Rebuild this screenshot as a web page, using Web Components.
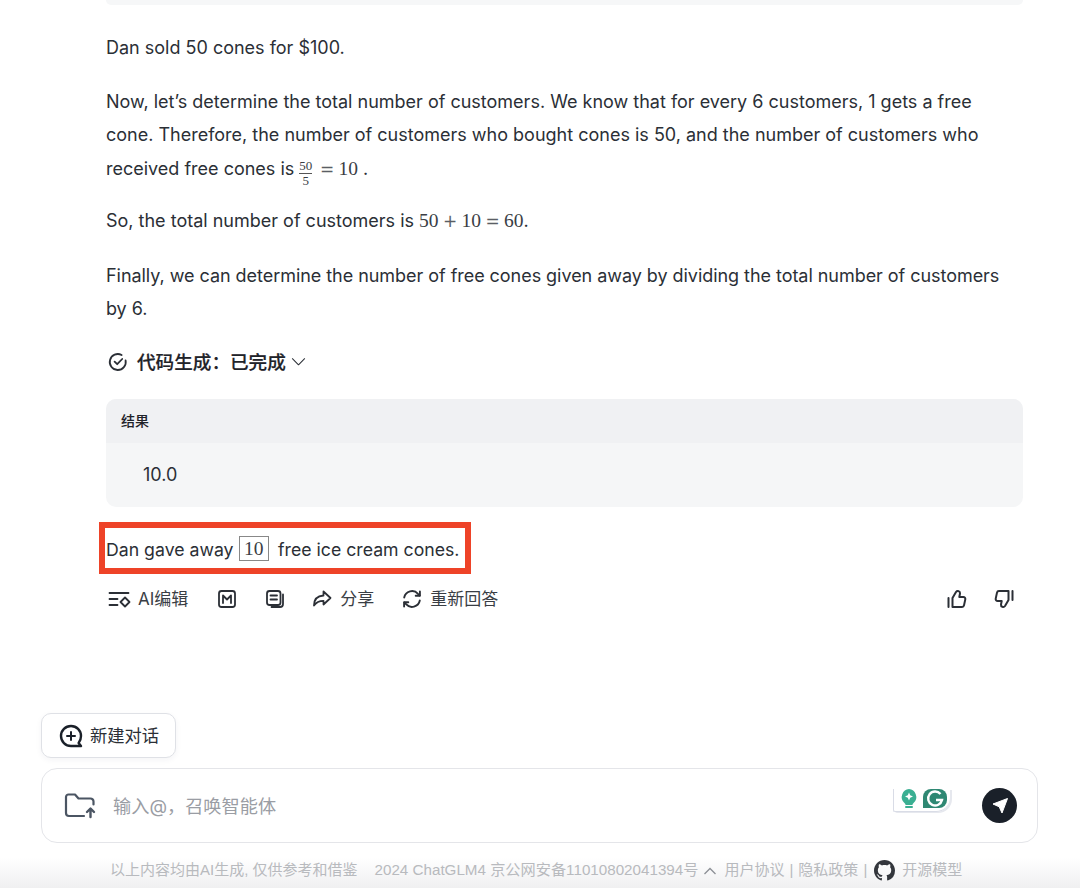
<!DOCTYPE html>
<html lang="en">
<head>
<meta charset="utf-8">
<title>ChatGLM</title>
<style>
  html, body { margin: 0; background: #fff; }
  body { font-family: Inter, "Noto Sans CJK SC", sans-serif; color: #2b2f36; width: 1080px; height: 888px; overflow: hidden; }
</style>
</head>
<body>
<chat-page></chat-page>

<script>
const CJK = `Inter, "Noto Sans CJK SC", sans-serif`;

class ChatPara extends HTMLElement {
  constructor() { super(); this.attachShadow({ mode: "open" }); }
  connectedCallback() {
    this.shadowRoot.innerHTML = `
    <style>
      :host { display: block; font: 18px/33.5px ${CJK}; color: #2b2f36; }
    </style>
    <slot></slot>`;
  }
}

class MathText extends HTMLElement {
  constructor() { super(); this.attachShadow({ mode: "open" }); }
  connectedCallback() {
    this.shadowRoot.innerHTML = `
    <style>
      :host { display: inline; font-family: "Liberation Serif", serif; font-size: 19.5px; line-height: 0; word-spacing: -1px; color: #3a3e45; }
    </style>
    <slot></slot>`;
  }
}

class MathFrac extends HTMLElement {
  constructor() { super(); this.attachShadow({ mode: "open" }); }
  connectedCallback() {
    this.shadowRoot.innerHTML = `
    <style>
      :host { display: inline-flex; flex-direction: column; align-items: center; vertical-align: 5px; margin: -8px 2px -8px 0; font: 13px/14.5px "Liberation Serif", serif; color: #3a3e45; }
      .top { border-bottom: 1px solid #555; }
    </style>
    <span class="top">${this.getAttribute("top")}</span>
    <span class="bottom">${this.getAttribute("bottom")}</span>`;
  }
}

class ToolStatus extends HTMLElement {
  constructor() { super(); this.attachShadow({ mode: "open" }); }
  connectedCallback() {
    this.shadowRoot.innerHTML = `
    <style>
      :host { display: flex; align-items: center; height: 32px; padding-left: 2px; font: 500 18.6px/32px ${CJK}; color: #1f2329; -webkit-text-stroke: .2px #1f2329; }
      svg { display: block; margin-right: 9px; }
      .chev { margin: 0 0 0 5px; }
    </style>
    <svg width="20" height="20" viewBox="0 0 20 20" fill="none" stroke="#2b2f36" stroke-width="1.8" stroke-linecap="round" stroke-linejoin="round">
      <path d="M17.6 8.4A8 8 0 1 1 13.6 3"/><path d="M6.6 9.6l2.6 2.6 5-5.2"/>
    </svg>
    <span>代码生成：已完成</span>
    <svg class="chev" width="15" height="15" viewBox="0 0 16 16" fill="none" stroke="#2b2f36" stroke-width="1.1" stroke-linecap="round" stroke-linejoin="round"><path d="M1.500 5l6.500 6.500 6.500-6.500"/></svg>`;
  }
}

class ResultBox extends HTMLElement {
  constructor() { super(); this.attachShadow({ mode: "open" }); }
  connectedCallback() {
    this.shadowRoot.innerHTML = `
    <style>
      :host { display: block; border-radius: 10px; overflow: hidden; background: #f5f6f7; }
      .head { height: 44px; background: #f0f1f3; padding-left: 15px; font: 500 14px/44px ${CJK}; color: #1f2329; }
      .body { height: 64px; padding-left: 37px; font: 18px/64px ${CJK}; color: #2b2f36; }
    </style>
    <div class="head">${this.getAttribute("title")}</div>
    <div class="body"><slot></slot></div>`;
  }
}

class ActionBar extends HTMLElement {
  constructor() { super(); this.attachShadow({ mode: "open" }); }
  connectedCallback() {
    this.shadowRoot.innerHTML = `
    <style>
      :host { display: flex; align-items: center; height: 30px; font: 17px/30px ${CJK}; color: #3a3e45; }
      .item { display: flex; align-items: center; gap: 6px; }
      svg { display: block; fill: none; stroke: #2b2f36; stroke-width: 1.8; stroke-linecap: round; stroke-linejoin: round; }
      .spacer { flex: 1; }
    </style>
    <div class="item" style="margin-left:2px">
      <svg width="24" height="24" viewBox="0 0 24 24"><path d="M1.500 6h19M1.500 12h8M1.500 18h8"/><path d="M17 10.500l4.500 4.500-4.500 4.500-4.500-4.500z"/></svg>
      <span>AI编辑</span>
    </div>
    <div class="item" style="margin-left:29px">
      <svg width="20" height="20" viewBox="0 0 20 20"><rect x="2" y="2" width="16" height="16" rx="2.500"/><path d="M6 14V6.500l4 4 4-4V14" /></svg>
    </div>
    <div class="item" style="margin-left:28px">
      <svg width="20" height="20" viewBox="0 0 20 20"><rect x="2" y="2" width="13.500" height="14" rx="2.500"/><path d="M5.500 6.500h6.500M5.500 10.500h6.500M18 5.500V15a3 3 0 0 1-3 3H6.500"/></svg>
    </div>
    <div class="item" style="margin-left:26px">
      <svg width="22" height="22" viewBox="0 0 22 22"><path d="M12.500 3.500l7 6.500-7 6.500v-3.700c-4 0-7 1-9.500 4.700 0-5.500 3-9.500 9.500-10z"/></svg>
      <span style="margin-left:1px">分享</span>
    </div>
    <div class="item" style="margin-left:27px">
      <svg width="22" height="22" viewBox="0 0 22 22"><path d="M3.200 9.500a8 8 0 0 1 13.800-3.700l1.600 1.700M18.800 12.500a8 8 0 0 1-13.800 3.700l-1.600-1.700" stroke-width="1.900"/><path d="M18.900 3.500v4.200h-4.200M3.100 18.500v-4.200h4.200" stroke-width="1.900"/></svg>
      <span style="margin-left:1px">重新回答</span>
    </div>
    <div class="spacer"></div>
    <svg width="22" height="22" viewBox="0 0 22 22"><path d="M2.500 10v9M6.500 10v9h9.500a2 2 0 0 0 2-1.600l1.300-6a2 2 0 0 0-2-2.400h-4l.7-3.500a2.200 2.200 0 0 0-4-1.500z" stroke-width="2"/></svg>
    <svg width="22" height="22" viewBox="0 0 22 22" style="margin-left:25px;margin-right:8px"><path d="M19.500 12V3M15.500 12V3H6a2 2 0 0 0-2 1.600l-1.300 6a2 2 0 0 0 2 2.400h4l-.7 3.500a2.200 2.200 0 0 0 4 1.500z" stroke-width="2"/></svg>`;
  }
}

class NewChatButton extends HTMLElement {
  constructor() { super(); this.attachShadow({ mode: "open" }); }
  connectedCallback() {
    this.shadowRoot.innerHTML = `
    <style>
      :host { display: inline-flex; align-items: center; box-sizing: border-box; width: 135px; height: 45px; padding-left: 17px; gap: 7px; border: 1px solid #dfe1e6; border-radius: 10px; background: #fff; box-shadow: 0 2px 6px rgba(30,40,70,.05); font: 17.300px/24px ${CJK}; color: #2b2f36; }
      svg { display: block; }
    </style>
    <svg width="24" height="24" viewBox="0 0 24 24" fill="none" stroke="#1a2029" stroke-width="2.400" stroke-linecap="round" stroke-linejoin="round">
      <path d="M22 22h-10a10 10 0 1 1 10-10c0 3-.8 5-2.400 7z"/><path d="M12 8v8M8 12h8" stroke-width="2"/>
    </svg>
    <span><slot></slot></span>`;
  }
}

class ChatComposer extends HTMLElement {
  constructor() { super(); this.attachShadow({ mode: "open" }); }
  connectedCallback() {
    this.shadowRoot.innerHTML = `
    <style>
      :host { display: flex; align-items: center; box-sizing: border-box; height: 75px; border: 1px solid #e4e5e9; border-radius: 16px; background: #fff; padding: 0 20px 0 22px; font: 18.200px/24px ${CJK}; }
      .folder { display: block; margin-right: 16px; }
      .hint { color: #9a9da4; flex: 1; }
      .ext { position: relative; width: 57px; height: 23px; margin: -10px 32px 0 0; border: 1px solid #d9dce6; border-top: 0; border-right: 0; border-radius: 0 0 14px 2px; box-sizing: border-box; box-shadow: 2px 1px 0 #e6e8ee; }
      .ext svg { position: absolute; }
      .send { display: flex; align-items: center; justify-content: center; width: 35px; height: 35px; border-radius: 50%; background: #1a2029; }
    </style>
    <svg class="folder" width="33" height="26" viewBox="0 0 33 26" fill="none" stroke="#4b5563" stroke-width="2.200" stroke-linecap="round" stroke-linejoin="round">
      <path d="M20 23H5a3 3 0 0 1-3-3V4a2.500 2.500 0 0 1 2.500-2.500h6.500l3.500 4h12a3 3 0 0 1 3 3v3"/>
      <path d="M26.500 24v-8M23 19l3.500-3.500L30 19" stroke-width="2.400"/>
    </svg>
    <span class="hint"><slot></slot></span>
    <div class="ext">
      <svg width="20" height="23" viewBox="0 0 20 23" style="left:5px;top:0">
        <path d="M10 0a8 8 0 0 1 5 13.500c-1 1-1.500 1.500-1.500 2.500h-7c0-1-.5-1.500-1.500-2.500A8 8 0 0 1 10 0z" fill="#3aaf92"/>
        <path d="M10 3.500l1.200 2.800 2.800 1.200-2.800 1.200L10 11.500 8.800 8.700 6 7.500l2.800-1.200z" fill="#fff"/>
        <path d="M7 18h6" stroke="#3aaf92" stroke-width="2" stroke-linecap="round"/>
      </svg>
      <svg width="24" height="23" viewBox="0 0 24 23" style="left:29px;top:0">
        <path d="M0 19V8A8 8 0 0 1 8 0h8a8 8 0 0 1 8 8v3a8 8 0 0 1-8 8z" fill="#2f8873"/>
        <path d="M17.500 5a7 7 0 1 0 1.500 6h-6" fill="none" stroke="#fff" stroke-width="2.400"/>
      </svg>
    </div>
    <div class="send">
      <svg width="20" height="20" viewBox="0 0 20 20"><path d="M17.500 2.500L12 17 9.200 10.800 3 8z" fill="#fff" stroke="#fff" stroke-width="1" stroke-linejoin="round"/></svg>
    </div>`;
  }
}

class ChatFooter extends HTMLElement {
  constructor() { super(); this.attachShadow({ mode: "open" }); }
  connectedCallback() {
    this.shadowRoot.innerHTML = `
    <style>
      :host { display: flex; align-items: center; height: 45px; padding: 9px 0 0 110px; box-sizing: border-box; background: linear-gradient(#fff 15px, #f0f0f1 45px); font: 15px/20px "Liberation Sans", "Noto Sans CJK SC", sans-serif; color: #b8babe; white-space: nowrap; }
      svg { display: block; }
      .sep { margin: 0 5px; }
    </style>
    <span>以上内容均由AI生成, 仅供参考和借鉴</span>
    <span style="margin-left:17px;font-size:15.200px">2024 ChatGLM4 京公网安备11010802041394号</span>
    <svg width="14" height="14" viewBox="0 0 14 14" fill="none" stroke="#8d9096" stroke-width="1.300" style="margin:2px 7px 0 5px"><path d="M1.500 10l5.500-5.500 5.500 5.500"/></svg>
    <span>用户协议</span><span class="sep">|</span><span>隐私政策</span><span class="sep">|</span>
    <svg width="21" height="21" viewBox="0 0 16 16" fill="#33363c" style="margin:0 7px 0 2px"><path d="M8 0C3.580 0 0 3.580 0 8c0 3.540 2.290 6.530 5.470 7.590.4.070.55-.17.55-.38 0-.19-.01-.82-.01-1.490-2.010.37-2.530-.49-2.690-.94-.09-.23-.48-.94-.82-1.130-.28-.15-.68-.52-.01-.53.63-.01 1.080.58 1.230.82.720 1.210 1.870.870 2.330.660.070-.520.280-.870.510-1.070-1.780-.2-3.640-.890-3.640-3.950 0-.870.310-1.590.820-2.150-.080-.2-.360-1.020.080-2.120 0 0 .670-.210 2.200.820.640-.180 1.320-.270 2-.270s1.360.090 2 .270c1.530-1.040 2.200-.820 2.200-.820.440 1.100.160 1.920.080 2.120.510.560.820 1.270.820 2.150 0 3.070-1.870 3.750-3.650 3.950.290.250.540.730.540 1.480 0 1.070-.010 1.930-.010 2.200 0 .210.150.460.550.380A8.010 8.010 0 0 0 16 8c0-4.420-3.580-8-8-8z"/></svg>
    <span>开源模型</span>`;
  }
}

class ChatPage extends HTMLElement {
  constructor() { super(); this.attachShadow({ mode: "open" }); }
  connectedCallback() {
    this.shadowRoot.innerHTML = `
    <style>
      :host { display: flex; flex-direction: column; height: 888px; }
      .thread { flex: 1; display: flex; flex-direction: column; padding: 0 57px 0 106px; }
      .code-end { height: 5px; background: #f6f7f8; border-radius: 0 0 10px 10px; margin-bottom: 26px; }
      chat-para { margin-bottom: 20px; }
      .op { font-family: "DejaVu Sans", sans-serif; font-size: 17px; line-height: 0; margin: 0 .5px; color: #5a5e65; }
      tool-status { margin: 0 0 21px; }
      .hl { position: relative; margin: 26px 0 0; font-size: 17.700px; }
      .red { position: absolute; left: -7px; top: -11px; width: 372px; height: 52px; box-sizing: border-box; border: 6px solid #ee4328; }
      .boxed { display: inline-block; border: 1px solid #888; padding: 0 4.500px; line-height: 23px; font-family: "Liberation Serif", serif; font-size: 19.500px; margin: 0 4px 0 0; color: #3a3e45; vertical-align: 1px; }
      action-bar { margin-top: 18px; }
      .bottom { padding: 0 42px 0 41px; display: flex; flex-direction: column; align-items: flex-start; gap: 10px; }
      chat-composer { align-self: stretch; }
    </style>
    <div class="thread">
      <div class="code-end"></div>
      <chat-para>Dan sold 50 cones for $100.</chat-para>
      <chat-para style="margin-bottom:19px">Now, let’s determine the total number of customers. We know that for every 6 customers, 1 gets a free cone. Therefore, the number of customers who bought cones is 50, and the number of customers who <span>received free cones is</span> <math-frac top="50" bottom="5"></math-frac> <math-text><span class="op">=</span> 10</math-text> .</chat-para>
      <chat-para style="margin-bottom:21px">So, the total number of customers is <math-text>50 <span class="op">+</span> 10 <span class="op">=</span> 60</math-text>.</chat-para>
      <chat-para style="letter-spacing:-.045px">Finally, we can determine the number of free cones given away by dividing the total number of customers by 6.</chat-para>
      <tool-status></tool-status>
      <result-box title="结果">10.0</result-box>
      <chat-para class="hl" style="margin-bottom:0">Dan gave away <span class="boxed">10</span> free ice cream cones.<div class="red"></div></chat-para>
      <action-bar></action-bar>
    </div>
    <div class="bottom">
      <new-chat-button>新建对话</new-chat-button>
      <chat-composer>输入@，召唤智能体</chat-composer>
    </div>
    <chat-footer></chat-footer>`;
  }
}

customElements.define("chat-para", ChatPara);
customElements.define("math-text", MathText);
customElements.define("math-frac", MathFrac);
customElements.define("tool-status", ToolStatus);
customElements.define("result-box", ResultBox);
customElements.define("action-bar", ActionBar);
customElements.define("new-chat-button", NewChatButton);
customElements.define("chat-composer", ChatComposer);
customElements.define("chat-footer", ChatFooter);
customElements.define("chat-page", ChatPage);
</script>
</body>
</html>
